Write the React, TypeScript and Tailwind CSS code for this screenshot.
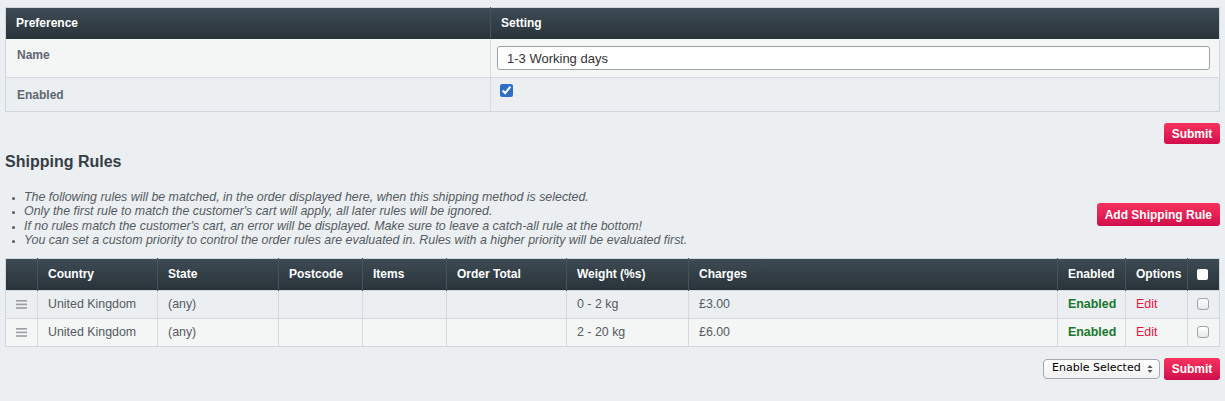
import React from "react";

const rules = [
  { country: "United Kingdom", state: "(any)", weight: "0 - 2 kg", charges: "£3.00" },
  { country: "United Kingdom", state: "(any)", weight: "2 - 20 kg", charges: "£6.00" },
];

const notes = [
  "The following rules will be matched, in the order displayed here, when this shipping method is selected.",
  "Only the first rule to match the customer's cart will apply, all later rules will be ignored.",
  "If no rules match the customer's cart, an error will be displayed. Make sure to leave a catch-all rule at the bottom!",
  "You can set a custom priority to control the order rules are evaluated in. Rules with a higher priority will be evaluated first.",
];

function RedButton({ children, className = "" }: { children: React.ReactNode; className?: string }) {
  return (
    <button
      className={`rounded-[3px] bg-linear-to-b from-[#f7325e] to-[#d10c4c] text-white font-bold text-[12px] leading-none whitespace-nowrap ${className}`}
    >
      {children}
    </button>
  );
}

function DragHandle() {
  return (
    <svg width="11" height="9" viewBox="0 0 11 9" className="mx-auto block">
      <rect x="0" y="0" width="11" height="1.6" fill="#999ea3" />
      <rect x="0" y="3.6" width="11" height="1.6" fill="#999ea3" />
      <rect x="0" y="7.2" width="11" height="1.6" fill="#999ea3" />
    </svg>
  );
}

function SoftCheckbox() {
  return (
    <span className="block w-[12px] h-[12px] rounded-[3px] border border-[#9ea3a8] bg-linear-to-b from-white to-[#e6e8ea]" />
  );
}

export default function App() {
  const th = "text-left font-bold text-white text-[12px] px-[10px] border-l border-[#46535b] first:border-l-0";
  const td = "px-[10px] text-[12.4px] text-[#555b61] border-l border-[#d3d9df] first:border-l-0";

  return (
    <div className="min-h-[401px] bg-[#ebeff2] px-[5px] pt-[7px] font-['Liberation_Sans',Arial,sans-serif]">
      {/* Preferences */}
      <table className="w-full table-fixed border-collapse border border-[#cfd6dd]">
        <colgroup>
          <col className="w-[485px]" />
          <col />
        </colgroup>
        <thead>
          <tr className="h-[31px] bg-linear-to-b from-[#3e4c55] to-[#29333a]">
            <th className={th}>Preference</th>
            <th className={th}>Setting</th>
          </tr>
        </thead>
        <tbody>
          <tr className="h-[39px] bg-[#f4f5f5] border-b border-[#d3d9df]">
            <td className="align-top pt-[7px] pl-[11px] text-[12px] font-bold text-[#5f6771]">Name</td>
            <td className="border-l border-[#d3d9df] pl-[6px] pr-[9px]">
              <input
                readOnly
                value="1-3 Working days"
                className="w-full h-[24px] rounded-[3px] border border-[#9aa1a8] bg-white px-[9px] text-[13px] text-[#333]"
              />
            </td>
          </tr>
          <tr className="h-[34px] bg-[#ebeff2]">
            <td className="pl-[11px] text-[12px] font-bold text-[#5f6771]">Enabled</td>
            <td className="align-top pt-[6px] pl-[9px] border-l border-[#d3d9df]">
              <input type="checkbox" checked readOnly className="block w-[13px] h-[13px] accent-[#2d6fc4]" />
            </td>
          </tr>
        </tbody>
      </table>

      <div className="flex justify-end mt-[11px]">
        <RedButton className="h-[21px] w-[56px]">Submit</RedButton>
      </div>

      <h2 className="mt-[8px] text-[16px] font-bold text-[#363d44] leading-[20px]">Shipping Rules</h2>

      <div className="flex items-center justify-between mt-[18px]">
        <ul className="list-disc pl-[19px] text-[12.4px] italic text-[#555b61] leading-[14.4px] marker:text-[9px]">
          {notes.map((n) => (
            <li key={n}>{n}</li>
          ))}
        </ul>
        <RedButton className="h-[23px] px-[8px] -mt-[8px]">Add Shipping Rule</RedButton>
      </div>

      {/* Rules table */}
      <table className="mt-[10px] w-full table-fixed border-collapse border border-[#cfd6dd]">
        <colgroup>
          <col className="w-[32px]" />
          <col className="w-[120px]" />
          <col className="w-[121px]" />
          <col className="w-[84px]" />
          <col className="w-[84px]" />
          <col className="w-[120px]" />
          <col className="w-[122px]" />
          <col />
          <col className="w-[68px]" />
          <col className="w-[62px]" />
          <col className="w-[32px]" />
        </colgroup>
        <thead>
          <tr className="h-[32px] bg-linear-to-b from-[#3e4c55] to-[#29333a]">
            <th className={th}></th>
            <th className={th}>Country</th>
            <th className={th}>State</th>
            <th className={th}>Postcode</th>
            <th className={th}>Items</th>
            <th className={th}>Order Total</th>
            <th className={th}>Weight (%s)</th>
            <th className={th}>Charges</th>
            <th className={th}>Enabled</th>
            <th className={th}>Options</th>
            <th className={`${th} pl-[9px]`}>
              <span className="block w-[11px] h-[11px] rounded-[2px] bg-white" />
            </th>
          </tr>
        </thead>
        <tbody>
          {rules.map((r, i) => (
            <tr
              key={i}
              className={`h-[28px] border-t border-[#d3d9df] ${i % 2 === 0 ? "bg-[#ebeff2]" : "bg-[#f4f5f5]"}`}
            >
              <td className={td}>
                <DragHandle />
              </td>
              <td className={td}>{r.country}</td>
              <td className={td}>{r.state}</td>
              <td className={td}></td>
              <td className={td}></td>
              <td className={td}></td>
              <td className={td}>{r.weight}</td>
              <td className={td}>{r.charges}</td>
              <td className={`${td} font-bold text-[#17782c]`}>Enabled</td>
              <td className={`${td} text-[#e8163f]`}>Edit</td>
              <td className={`${td} pl-[9px]`}>
                <SoftCheckbox />
              </td>
            </tr>
          ))}
        </tbody>
      </table>

      <div className="flex justify-end items-center gap-[4px] mt-[11px]">
        <div className="relative h-[20px] w-[117px] rounded-[4px] border border-[#a5a9ad] bg-linear-to-b from-white to-[#f1f1f1] flex items-center pl-[8px]">
          <span className="text-[11px] text-black font-['DejaVu_Sans',sans-serif]">Enable Selected</span>
          <svg width="6" height="10" viewBox="0 0 6 10" className="absolute right-[6px] top-[4px]">
            <path d="M0.5 4 L3 1 L5.5 4 Z" fill="#555" />
            <path d="M0.5 6 L3 9 L5.5 6 Z" fill="#555" />
          </svg>
        </div>
        <RedButton className="h-[22px] w-[56px]">Submit</RedButton>
      </div>
    </div>
  );
}
